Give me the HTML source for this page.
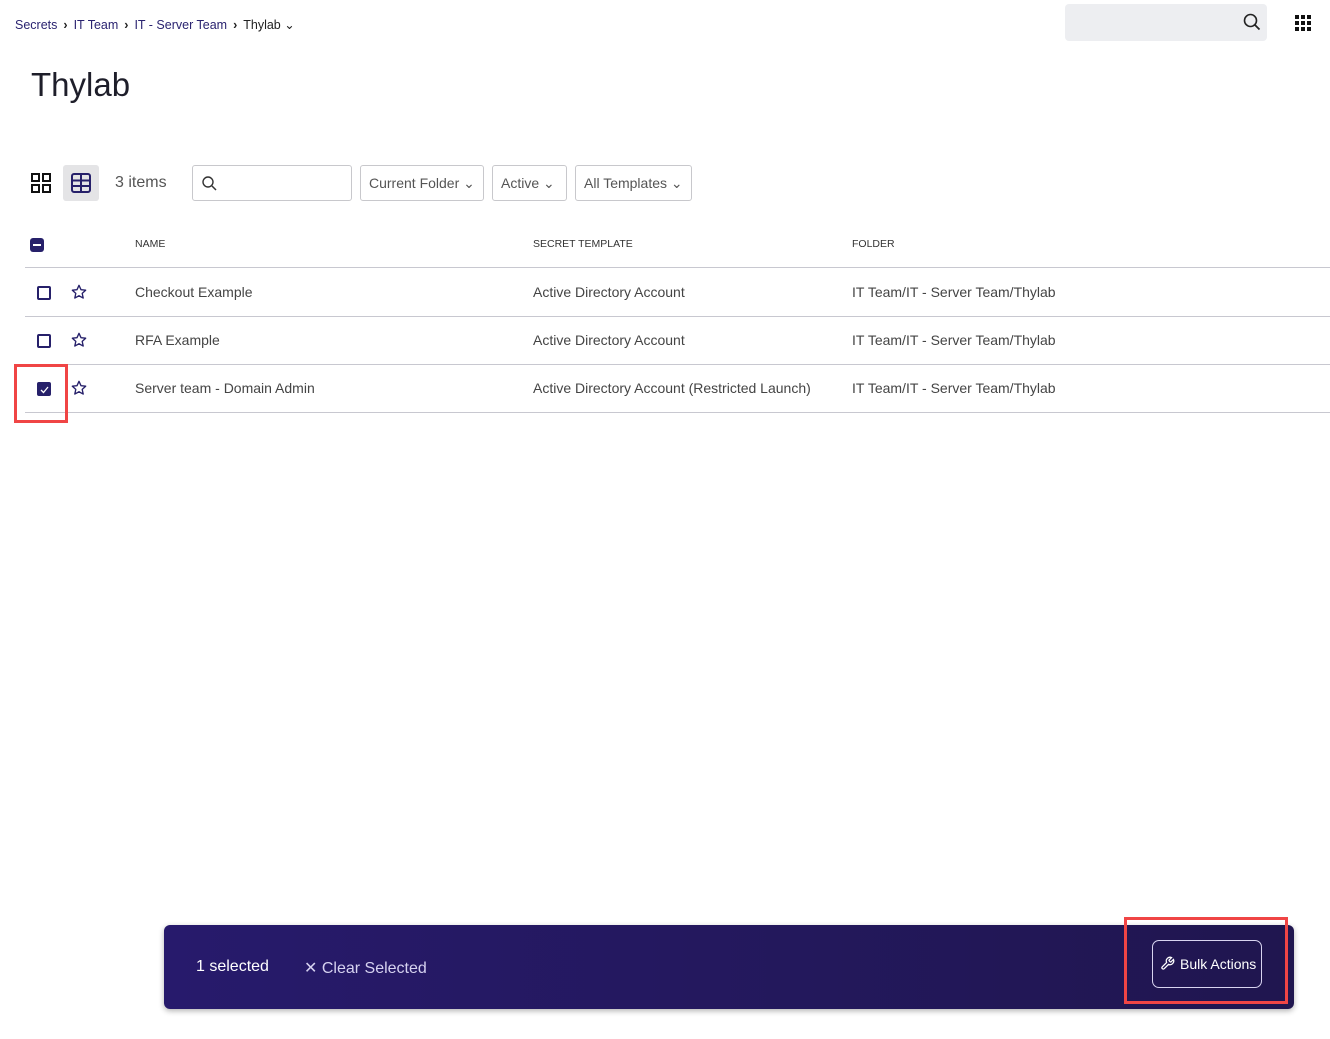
<!DOCTYPE html>
<html><head><meta charset="utf-8"><style>
*{box-sizing:border-box;margin:0;padding:0}
body{width:1330px;height:1039px;background:#fff;font-family:"Liberation Sans",sans-serif;position:relative;overflow:hidden;color:#333}
.a{position:absolute}
.bc{top:17px;left:15px;font-size:12.5px;color:#2a2370;white-space:nowrap}
.bc span.s{color:#222;margin:0 6px;font-weight:bold}
h1{position:absolute;top:66px;left:31px;font-size:33px;font-weight:normal;color:#1e1e2a}
.box{position:absolute;top:165px;height:36px;border:1px solid #c8c8cc;border-radius:3px;font-size:14px;color:#555;line-height:34px;padding-left:8px}
.hdr{font-size:10.5px;color:#333;top:238px}
.line{position:absolute;left:25px;right:0;height:1px;background:#c8c8d0}
.cell{position:absolute;font-size:14px;color:#444}
.cb{position:absolute;left:37px;width:14px;height:14px;border:2px solid #26206a;border-radius:2px}
.red{position:absolute;border:3px solid #f04545}
</style></head><body>
<div class="a bc">Secrets<span class="s">›</span>IT Team<span class="s">›</span>IT - Server Team<span class="s">›</span><span style="color:#222">Thylab ⌄</span></div>
<div class="a" style="left:1065px;top:4px;width:202px;height:37px;background:#edeef1;border-radius:4px"></div>
<svg class="a" style="left:1243px;top:13px" width="18" height="18" viewBox="0 0 18 18"><circle cx="7.5" cy="7.5" r="6" fill="none" stroke="#222" stroke-width="1.6"/><path d="M12 12l4.5 4.5" stroke="#222" stroke-width="1.8"/></svg>
<svg class="a" style="left:1295px;top:15px" width="16" height="16"><g fill="#111"><rect x="0" y="0" width="4" height="4"/><rect x="6" y="0" width="4" height="4"/><rect x="12" y="0" width="4" height="4"/><rect x="0" y="6" width="4" height="4"/><rect x="6" y="6" width="4" height="4"/><rect x="12" y="6" width="4" height="4"/><rect x="0" y="12" width="4" height="4"/><rect x="6" y="12" width="4" height="4"/><rect x="12" y="12" width="4" height="4"/></g></svg>
<h1>Thylab</h1>
<svg class="a" style="left:31px;top:173px" width="20" height="20"><g fill="none" stroke="#111" stroke-width="2"><rect x="1" y="1" width="7" height="7"/><rect x="12" y="1" width="7" height="7"/><rect x="1" y="12" width="7" height="7"/><rect x="12" y="12" width="7" height="7"/></g></svg>
<div class="a" style="left:63px;top:165px;width:36px;height:36px;background:#e4e4e6;border-radius:3px"></div>
<svg class="a" style="left:71px;top:173px" width="20" height="20"><g fill="none" stroke="#26206a" stroke-width="2"><rect x="1" y="1" width="18" height="18" rx="2"/><path d="M1 7.5h18M1 13h18M10 1v18"/></g></svg>
<div class="a" style="left:115px;top:174px;font-size:16px;color:#555">3 items</div>
<div class="box" style="left:192px;width:160px"><svg style="position:absolute;left:9px;top:10px" width="15" height="15"><circle cx="6" cy="6" r="5" fill="none" stroke="#333" stroke-width="1.4"/><path d="M10 10l4 4" stroke="#333" stroke-width="1.5"/></svg></div>
<div class="box" style="left:360px;width:124px">Current Folder ⌄</div>
<div class="box" style="left:492px;width:75px">Active ⌄</div>
<div class="box" style="left:575px;width:117px">All Templates ⌄</div>
<div class="a" style="left:30px;top:238px;width:14px;height:14px;background:#26206a;border-radius:3px"><div style="position:absolute;left:3px;top:6px;width:8px;height:2px;background:#fff"></div></div>
<div class="a hdr" style="left:135px">NAME</div>
<div class="a hdr" style="left:533px">SECRET TEMPLATE</div>
<div class="a hdr" style="left:852px">FOLDER</div>
<div class="line" style="top:267px"></div>
<div class="line" style="top:316px"></div>
<div class="line" style="top:364px"></div>
<div class="line" style="top:412px"></div>
<div class="cb" style="top:286px"></div>
<div class="cb" style="top:334px"></div>
<div class="cb" style="top:382px;background:#26206a"><svg style="position:absolute;left:1px;top:1px" width="9" height="9"><path d="M1 5l2.5 2.5L8 2" fill="none" stroke="#fff" stroke-width="1.3"/></svg></div>
<svg class="a" style="left:71px;top:284px" width="16" height="16" viewBox="0 0 24 24"><path d="M12 2l3 6.5 7 .8-5.2 4.8 1.5 7L12 17.6 5.7 21.1l1.5-7L2 9.3l7-.8z" fill="none" stroke="#26206a" stroke-width="2" stroke-linejoin="round"/></svg>
<svg class="a" style="left:71px;top:332px" width="16" height="16" viewBox="0 0 24 24"><path d="M12 2l3 6.5 7 .8-5.2 4.8 1.5 7L12 17.6 5.7 21.1l1.5-7L2 9.3l7-.8z" fill="none" stroke="#26206a" stroke-width="2" stroke-linejoin="round"/></svg>
<svg class="a" style="left:71px;top:380px" width="16" height="16" viewBox="0 0 24 24"><path d="M12 2l3 6.5 7 .8-5.2 4.8 1.5 7L12 17.6 5.7 21.1l1.5-7L2 9.3l7-.8z" fill="none" stroke="#26206a" stroke-width="2" stroke-linejoin="round"/></svg>
<div class="cell" style="left:135px;top:284px">Checkout Example</div>
<div class="cell" style="left:533px;top:284px">Active Directory Account</div>
<div class="cell" style="left:852px;top:284px">IT Team/IT - Server Team/Thylab</div>
<div class="cell" style="left:135px;top:332px">RFA Example</div>
<div class="cell" style="left:533px;top:332px">Active Directory Account</div>
<div class="cell" style="left:852px;top:332px">IT Team/IT - Server Team/Thylab</div>
<div class="cell" style="left:135px;top:380px">Server team - Domain Admin</div>
<div class="cell" style="left:533px;top:380px">Active Directory Account (Restricted Launch)</div>
<div class="cell" style="left:852px;top:380px">IT Team/IT - Server Team/Thylab</div>
<div class="red" style="left:14px;top:364px;width:54px;height:59px"></div>
<div class="a" style="left:164px;top:925px;width:1130px;height:84px;border-radius:6px;background:linear-gradient(90deg,#271a6c,#20164f);box-shadow:0 2px 6px rgba(0,0,0,.3)"></div>
<div class="a" style="left:196px;top:958px;font-size:16px;color:#fff">1 selected</div>
<div class="a" style="left:304px;top:958px;font-size:16px;color:#d6d2f0">✕ Clear Selected</div>
<div class="a" style="left:1152px;top:940px;width:110px;height:48px;border:1px solid #d8d4f0;border-radius:7px;color:#fff;font-size:14px;line-height:46px;padding-left:27px">Bulk Actions</div>
<svg class="a" style="left:1160px;top:956px" width="15" height="15" viewBox="0 0 24 24"><path d="M14.7 6.3a1 1 0 000 1.4l1.6 1.6a1 1 0 001.4 0l3.8-3.8a6 6 0 01-7.9 7.9l-6.9 6.9a2.1 2.1 0 01-3-3l6.9-6.9a6 6 0 017.9-7.9z" fill="none" stroke="#fff" stroke-width="2"/></svg>
<div class="red" style="left:1124px;top:917px;width:164px;height:87px"></div>
</body></html>
